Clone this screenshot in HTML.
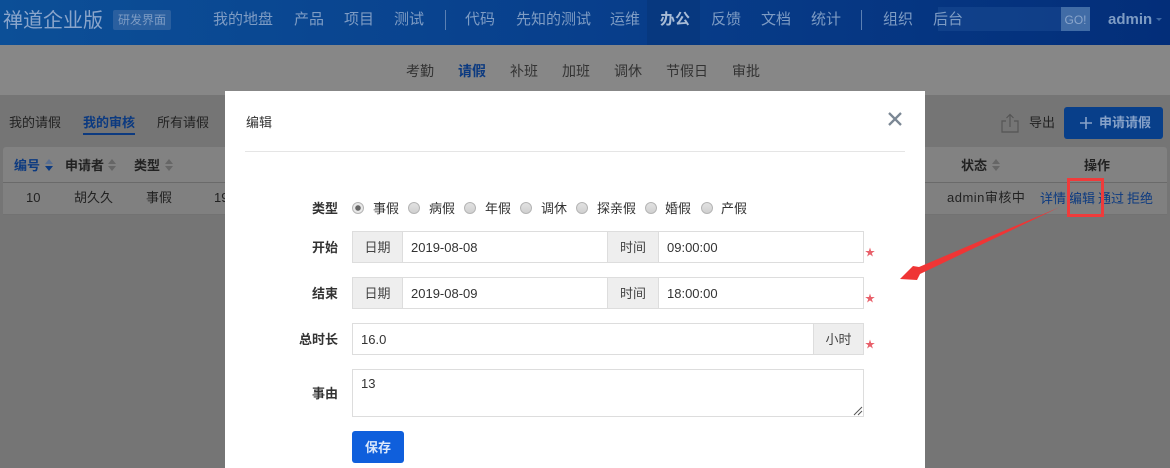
<!DOCTYPE html>
<html><head><meta charset="utf-8"><style>
html,body{margin:0;padding:0}
body{width:1170px;height:468px;overflow:hidden;position:relative;background:#757575;font-family:"Liberation Sans","Noto Sans CJK SC",sans-serif;font-size:13px;color:#2a2a2a}
.a{position:absolute;white-space:nowrap;line-height:18px}
.h{position:absolute;left:0;top:0;width:1170px;height:45px;background:linear-gradient(90deg,#0c4f97,#083f8c 50%,#032e79)}
.n{color:#7e9cc4;font-size:15px;top:11px}
.s{position:absolute;left:0;top:45px;width:1170px;height:50px;background:#878787}
.t{position:absolute;left:3px;top:147px;width:1164px;height:35px;background:#828282;border-bottom:1px solid #6a6a6a;border-radius:3px 3px 0 0}
.r{position:absolute;left:3px;top:183px;width:1164px;height:31px;background:#808080;border-bottom:1px solid #727272}
.b{font-weight:bold}
.m{position:absolute;left:225px;top:91px;width:700px;height:377px;background:#fff}
.f{position:absolute;box-sizing:border-box;background:#fff;border:1px solid #ddd}
.g{position:absolute;box-sizing:border-box;background:#eee;border:1px solid #ddd;text-align:center;color:#444;line-height:32px;height:32px}
.l{font-weight:bold;color:#333;text-align:right;width:80px}
.v{color:#333;font-size:13px}
.o{position:absolute;box-sizing:border-box;width:12px;height:12px;top:111px;border-radius:50%;border:1px solid #b5b5b5;background:linear-gradient(#e2e2e2,#d0d0d0)}
.star{position:absolute;color:#e8606a;font-size:10px;line-height:12px}
.u,.d{position:absolute;width:0;height:0;border:4px solid transparent}
.u{top:159px;border-top:0;border-bottom:5px solid #666}
.d{top:166px;border-bottom:0;border-top:5px solid #666}
</style></head><body>
<div class="h"></div>
<div class="a" style="left:938px;top:7px;width:123px;height:24px;background:rgba(30,80,150,.45)"></div>
<div class="a" style="left:3px;top:7px;font-size:20px;line-height:28px;color:#8aa5cb">禅道企业版</div>
<div class="a" style="left:113px;top:10px;width:53px;height:20px;padding-left:5px;background:#2a5f9f;border-radius:2px;color:#7e9cc4;font-size:12px;line-height:20px">研发界面</div>
<div class="a n" style="left:213px">我的地盘</div>
<div class="a n" style="left:294px">产品</div>
<div class="a n" style="left:344px">项目</div>
<div class="a n" style="left:394px">测试</div>
<div class="a" style="left:445px;top:10px;width:1px;height:20px;background:#5b80b3"></div>
<div class="a n" style="left:465px">代码</div>
<div class="a n" style="left:516px">先知的测试</div>
<div class="a n" style="left:610px">运维</div>
<div class="a" style="left:647px;top:0;width:53px;height:45px;background:#07387f"></div>
<div class="a n b" style="left:660px;color:#a9bcd6">办公</div>
<div class="a n" style="left:711px">反馈</div>
<div class="a n" style="left:761px">文档</div>
<div class="a n" style="left:811px">统计</div>
<div class="a" style="left:861px;top:10px;width:1px;height:20px;background:#5b80b3"></div>
<div class="a n" style="left:883px">组织</div>
<div class="a n" style="left:933px">后台</div>
<div class="a" style="left:1061px;top:7px;width:29px;height:24px;background:#416ca6;color:#8aa5cb;font-size:12px;line-height:26px;text-align:center">GO!</div>
<div class="a" style="left:1108px;top:11px;font-size:15px;font-weight:bold;color:#7e9cc4">admin</div>
<div style="position:absolute;left:1156px;top:18px;width:0;height:0;border:3px solid transparent;border-top-color:#3f68a3"></div>
<div class="s"></div>
<div class="a" style="left:406px;top:62px;color:#333;font-size:14px">考勤</div>
<div class="a b" style="left:458px;top:62px;color:#0c3a80;font-size:14px">请假</div>
<div class="a" style="left:510px;top:62px;color:#333;font-size:14px">补班</div>
<div class="a" style="left:562px;top:62px;color:#333;font-size:14px">加班</div>
<div class="a" style="left:614px;top:62px;color:#333;font-size:14px">调休</div>
<div class="a" style="left:666px;top:62px;color:#333;font-size:14px">节假日</div>
<div class="a" style="left:732px;top:62px;color:#333;font-size:14px">审批</div>
<div class="a" style="left:9px;top:114px;color:#222">我的请假</div>
<div class="a b" style="left:83px;top:114px;color:#0c3a80">我的审核</div>
<div class="a" style="left:83px;top:133px;width:52px;height:2px;background:#0c3a80"></div>
<div class="a" style="left:157px;top:114px;color:#222">所有请假</div>
<svg class="a" style="left:1000px;top:113px" width="20" height="20" viewBox="0 0 20 20" fill="none" stroke="#555" stroke-width="1.2"><path d="M6 8H2V19H18V8H14M10 14V2M6.500 5L10 1.500L13.500 5"/></svg>
<div class="a" style="left:1029px;top:114px;color:#222;font-size:13px">导出</div>
<div class="a b" style="left:1064px;top:107px;width:99px;height:32px;background:#083f8a;border-radius:3px;color:#87a2c8;line-height:32px;padding-left:35px;box-sizing:border-box">申请请假</div>
<svg class="a" style="left:1080px;top:117px" width="12" height="12" stroke="#87a2c8" stroke-width="1.600"><path d="M6 0V12M0 6H12"/></svg>
<div class="t"></div><div class="r"></div>
<div class="a b" style="left:14px;top:157px;color:#0c3a80">编号</div>
<div class="a b" style="left:65px;top:157px;color:#222">申请者</div>
<div class="a b" style="left:134px;top:157px;color:#222">类型</div>
<div class="u" style="left:45px;border-bottom-color:#5a6f90"></div>
<div class="d" style="left:45px;border-top-color:#0c3a80"></div>
<div class="u" style="left:108px"></div><div class="d" style="left:108px"></div>
<div class="u" style="left:165px"></div><div class="d" style="left:165px"></div>
<div class="a b" style="left:961px;top:157px;color:#222">状态</div>
<div class="u" style="left:992px"></div><div class="d" style="left:992px"></div>
<div class="a b" style="left:1084px;top:157px;color:#222">操作</div>
<div class="a" style="left:26px;top:189px;color:#222">10</div>
<div class="a" style="left:74px;top:189px;color:#222">胡久久</div>
<div class="a" style="left:146px;top:189px;color:#222">事假</div>
<div class="a" style="left:214px;top:189px;color:#222">19</div>
<div class="a" style="left:947px;top:189px;color:#222;letter-spacing:.5px">admin审核中</div>
<div class="a" style="left:1040px;top:190px;color:#0c3a80">详情</div>
<div class="a" style="left:1069px;top:190px;color:#0c3a80">编辑</div>
<div class="a" style="left:1098px;top:190px;color:#0c3a80">通过</div>
<div class="a" style="left:1127px;top:190px;color:#0c3a80">拒绝</div>
<div class="m"></div>
<div class="a" style="left:246px;top:113px;color:#333;line-height:20px">编辑</div>
<div class="a" style="left:245px;top:151px;width:660px;height:1px;background:#e5e5e5"></div>
<svg class="a" style="left:887px;top:111px" width="16" height="16" viewBox="0 0 16 16" stroke="#7b8794" stroke-width="2.300"><path d="M2 2L14 14M14 2L2 14"/></svg>
<div class="a l" style="left:258px;top:200px">类型</div>
<div class="a l" style="left:258px;top:239px">开始</div>
<div class="a l" style="left:258px;top:285px">结束</div>
<div class="a l" style="left:258px;top:331px">总时长</div>
<div class="a l" style="left:258px;top:385px">事由</div>
<div class="o" style="left:352px;top:202px;background:radial-gradient(#666 0 2.500px,#e8e8e8 3px)"></div>
<div class="a" style="left:373px;top:200px;color:#333">事假</div>
<div class="o" style="left:408px;top:202px"></div>
<div class="a" style="left:429px;top:200px;color:#333">病假</div>
<div class="o" style="left:464px;top:202px"></div>
<div class="a" style="left:485px;top:200px;color:#333">年假</div>
<div class="o" style="left:520px;top:202px"></div>
<div class="a" style="left:541px;top:200px;color:#333">调休</div>
<div class="o" style="left:576px;top:202px"></div>
<div class="a" style="left:597px;top:200px;color:#333">探亲假</div>
<div class="o" style="left:645px;top:202px"></div>
<div class="a" style="left:665px;top:200px;color:#333">婚假</div>
<div class="o" style="left:701px;top:202px"></div>
<div class="a" style="left:721px;top:200px;color:#333">产假</div>
<div class="f" style="left:352px;top:231px;width:512px;height:32px"></div>
<div class="g" style="left:352px;top:231px;width:51px">日期</div>
<div class="g" style="left:607px;top:231px;width:52px">时间</div>
<div class="a v" style="left:411px;top:239px">2019-08-08</div>
<div class="a v" style="left:667px;top:239px">09:00:00</div>
<div class="f" style="left:352px;top:277px;width:512px;height:32px"></div>
<div class="g" style="left:352px;top:277px;width:51px">日期</div>
<div class="g" style="left:607px;top:277px;width:52px">时间</div>
<div class="a v" style="left:411px;top:285px">2019-08-09</div>
<div class="a v" style="left:667px;top:285px">18:00:00</div>
<div class="f" style="left:352px;top:323px;width:512px;height:32px"></div>
<div class="g" style="left:813px;top:323px;width:51px">小时</div>
<div class="a v" style="left:361px;top:331px">16.0</div>
<div class="f" style="left:352px;top:369px;width:512px;height:48px"></div>
<div class="a v" style="left:361px;top:375px">13</div>
<svg class="a" style="left:853px;top:406px" width="10" height="10" stroke="#555" stroke-width="1"><path d="M1 9L9 1M5 9L9 5"/></svg>
<div class="star" style="left:865px;top:248px">★</div>
<div class="star" style="left:865px;top:294px">★</div>
<div class="star" style="left:865px;top:340px">★</div>
<div class="a b" style="left:352px;top:431px;width:52px;height:32px;background:#0f5fdc;border-radius:3px;color:#dbe8fb;text-align:center;line-height:33px">保存</div>
<div class="a" style="left:1067px;top:178px;width:37px;height:39px;box-sizing:border-box;border:3px solid #ef3b3b"></div>
<svg class="a" style="left:0;top:0" width="1170" height="468"><path d="M1060 207L919 267L913 266L900 279L917 280L920 274Z" fill="#ef3535"/></svg>
</body></html>
